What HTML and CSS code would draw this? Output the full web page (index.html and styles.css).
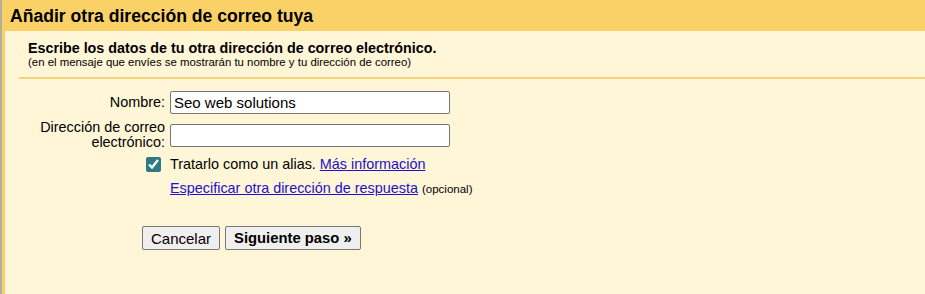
FILE: index.html
```html
<!DOCTYPE html>
<html lang="es">
<head>
  <meta charset="UTF-8">
  <title>Añadir otra dirección de correo tuya</title>
  <link rel="stylesheet" href="styles.css">
</head>
<body>
  <div class="frame">
    <div class="panel">
      <h1 class="title">Añadir otra dirección de correo tuya</h1>

      <div class="intro">
        <p class="intro-main">Escribe los datos de tu otra dirección de correo electrónico.</p>
        <p class="intro-note">(en el mensaje que envíes se mostrarán tu nombre y tu dirección de correo)</p>
      </div>
      <div class="sep"></div>

      <!-- formulario -->
      <form class="form" onsubmit="return false;">
        <div class="row">
          <label class="lbl" for="name">Nombre:</label>
          <input id="name" class="field" type="text" value="Seo web solutions">
        </div>
        <div class="row">
          <label class="lbl" for="mail">Dirección de correo electrónico:</label>
          <input id="mail" class="field" type="text">
        </div>
        <div class="row row-check">
          <span class="lbl"><input id="alias" class="chk" type="checkbox" checked></span>
          <span><label for="alias">Tratarlo como un alias.</label> <a href="#">Más información</a></span>
        </div>
        <div class="row row-link">
          <span class="lbl"></span>
          <span><a href="#">Especificar otra dirección de respuesta</a> <small>(opcional)</small></span>
        </div>
        <div class="actions">
          <button class="btn" type="button">Cancelar</button>
          <button class="btn btn-next" type="submit">Siguiente paso »</button>
        </div>
      </form>
    </div>
  </div>
</body>
</html>
```

FILE: styles.css
```css
/* base */
html, body { margin: 0; height: 100%; }
body { font-family: Arial, "Liberation Sans", sans-serif; color: #000; background: #fff6d8; }
.frame { height: 100%; border-left: 2px solid #b4ae9c; }
.panel { height: 100%; border-left: 3px solid #f9d167; background: #fff6d8; }

.title { margin: 0; height: 31px; line-height: 32px; padding-left: 5px; background: #f9d167; font-size: 17.6px; font-weight: bold; }

/* intro */
.intro { padding: 10px 0 0 23px; }
.intro p { margin: 0; }
.intro-main { font-size: 14.3px; font-weight: bold; line-height: 15px; }
.intro-note { font-size: 11.4px; line-height: 13px; }
.sep { margin: 8px 0 0 14px; height: 2px; background: #f3d37a; }

/* form */
.form { padding-top: 12px; font-size: 14.4px; }
.row { display: flex; align-items: center; margin-bottom: 6px; }
.lbl { width: 160px; flex: none; text-align: right; padding-right: 5px; line-height: 15px; }
.field { width: 280px; height: 23px; box-sizing: border-box; margin: 0; padding: 1px 3px; border: 1px solid #767676; border-radius: 2px; font: 15px Arial, "Liberation Sans", sans-serif; background: #fff; }
.row-check { margin-bottom: 7px; }
.row-check .lbl { display: flex; justify-content: flex-end; padding-right: 9px; width: 156px; }
.row-check > span:last-child, .row-link > span:last-child { line-height: 17px; }
.chk { margin: 0; width: 15px; height: 15px; accent-color: #2b7a84; }
a { color: #2211cc; text-decoration: underline; }
small { font-size: 11.5px; }

.actions { padding: 22px 0 0 137px; display: flex; gap: 5px; }
.btn { height: 24px; padding: 0 8px; font: 15px Arial, "Liberation Sans", sans-serif; color: #000; background: #efefef; border: 1px solid #767676; border-radius: 2px; }
.btn-next { font-weight: bold; font-size: 14.8px; }
```
